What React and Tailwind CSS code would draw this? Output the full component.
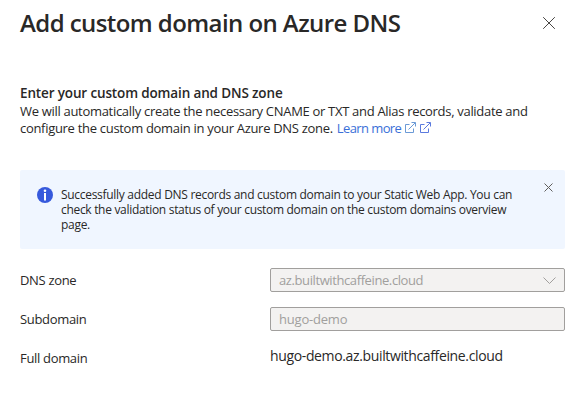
function CloseIcon({ className }) {
  return (
    <svg className={className} viewBox="0 0 12 12" fill="none" stroke="currentColor">
      <path d="M0.2 0.2L11.8 11.8M11.8 0.2L0.2 11.8" />
    </svg>
  );
}

function DismissIcon() {
  return (
    <svg className="size-[9px]" viewBox="0 0 9 9" fill="none" stroke="currentColor">
      <path d="M0.5 0.5L8.5 8.5M8.5 0.5L0.5 8.5" />
    </svg>
  );
}

function ExternalIcon({ className }) {
  return (
    <svg className={className} viewBox="0 0 11 11" fill="none" stroke="currentColor">
      <path d="M4.5 2.5H0.5V10.5H8.5V6.5M3.5 7.5L10.2 0.8M6.5 0.5H10.5V4.5" />
    </svg>
  );
}

function InfoIcon() {
  return (
    <svg className="mt-[17px] ml-[17px] size-4 shrink-0" viewBox="0 0 16 16">
      <circle cx="8" cy="8" r="8" fill="#3659dc" />
      <circle cx="8" cy="3.8" r="1.3" fill="#fff" />
      <path d="M7 6h2v7.5H7z" fill="#fff" />
    </svg>
  );
}

function Field({ label, children }) {
  return (
    <div className="flex h-[24px] items-center">
      <div className="w-[250px] pt-[2px] text-[13px] tracking-[-0.32px]">{label}</div>
      {children}
    </div>
  );
}

export default function App() {
  return (
    <main className="h-[417px] w-[584px] overflow-hidden bg-white pl-5 pr-[19px] font-['Open_Sans','Noto_Sans',sans-serif] text-[13px] whitespace-nowrap text-[#292827]">
      <header className="flex h-[84px] items-start justify-between pt-[6px]">
        <h1 className="text-[24px] leading-[33px] font-semibold tracking-[-0.57px]">
          Add custom domain on Azure DNS
        </h1>
        <button aria-label="Close" className="mt-[11px] mr-[10px] text-[#484644]">
          <CloseIcon className="size-3" />
        </button>
      </header>

      <section className="leading-[17px]">
        <h2 className="h-[19px] text-[13.5px] leading-[18px] font-semibold tracking-[-0.14px]">
          Enter your custom domain and DNS zone
        </h2>
        <p className="tracking-[-0.305px]">
          We will automatically create the necessary CNAME or TXT and Alias records, validate and
        </p>
        <p className="flex">
          <span className="tracking-[-0.3px]">configure the custom domain in your Azure DNS zone.</span>
          <a className="ml-1 flex text-[#3a6fd8]">
            <span className="tracking-[-0.6px]">Learn more</span>
            <ExternalIcon className="mt-[2px] ml-1 size-[11px] text-[#6b9ad6]" />
            <ExternalIcon className="mt-[2px] ml-1 size-[11px] text-[#5b7ade]" />
          </a>
        </p>
      </section>

      <section className="mt-[33px] flex h-[79px] rounded-[2px] bg-[#f0f6ff]">
        <InfoIcon />
        <div className="mt-[17px] ml-2 text-[12px] leading-[15px]">
          <p className="tracking-[-0.295px]">Successfully added DNS records and custom domain to your Static Web App. You can</p>
          <p className="tracking-[-0.31px]">check the validation status of your custom domain on the custom domains overview</p>
          <p className="tracking-[-0.3px]">page.</p>
        </div>
        <button aria-label="Dismiss" className="mt-[13px] mr-[12px] ml-auto flex items-start text-[#605e5c]">
          <DismissIcon />
        </button>
      </section>

      <section className="mt-[19px] flex flex-col gap-[15px]">
        <Field label="DNS zone">
          <div className="flex h-6 w-[295px] items-center justify-between rounded-[2px] border border-[#a19f9d] bg-[#f3f2f1] px-2 text-[#a19f9d]">
            <span className="pt-[2px] tracking-[-0.4px]">az.builtwithcaffeine.cloud</span>
            <svg className="h-[7px] w-[13px]" viewBox="0 0 13 7" fill="none" stroke="currentColor">
              <path d="M0.5 0.5L6.5 6.5L12.5 0.5" />
            </svg>
          </div>
        </Field>
        <Field label="Subdomain">
          <div className="flex h-6 w-[295px] items-center rounded-[2px] border border-[#a19f9d] bg-[#f3f2f1] pl-2 text-[#a19f9d]">
            <span className="pt-[2px] tracking-[-0.2px]">hugo-demo</span>
          </div>
        </Field>
        <Field label="Full domain">
          <span className="mb-[6px] text-[14px] tracking-[-0.36px]">hugo-demo.az.builtwithcaffeine.cloud</span>
        </Field>
      </section>
    </main>
  );
}
